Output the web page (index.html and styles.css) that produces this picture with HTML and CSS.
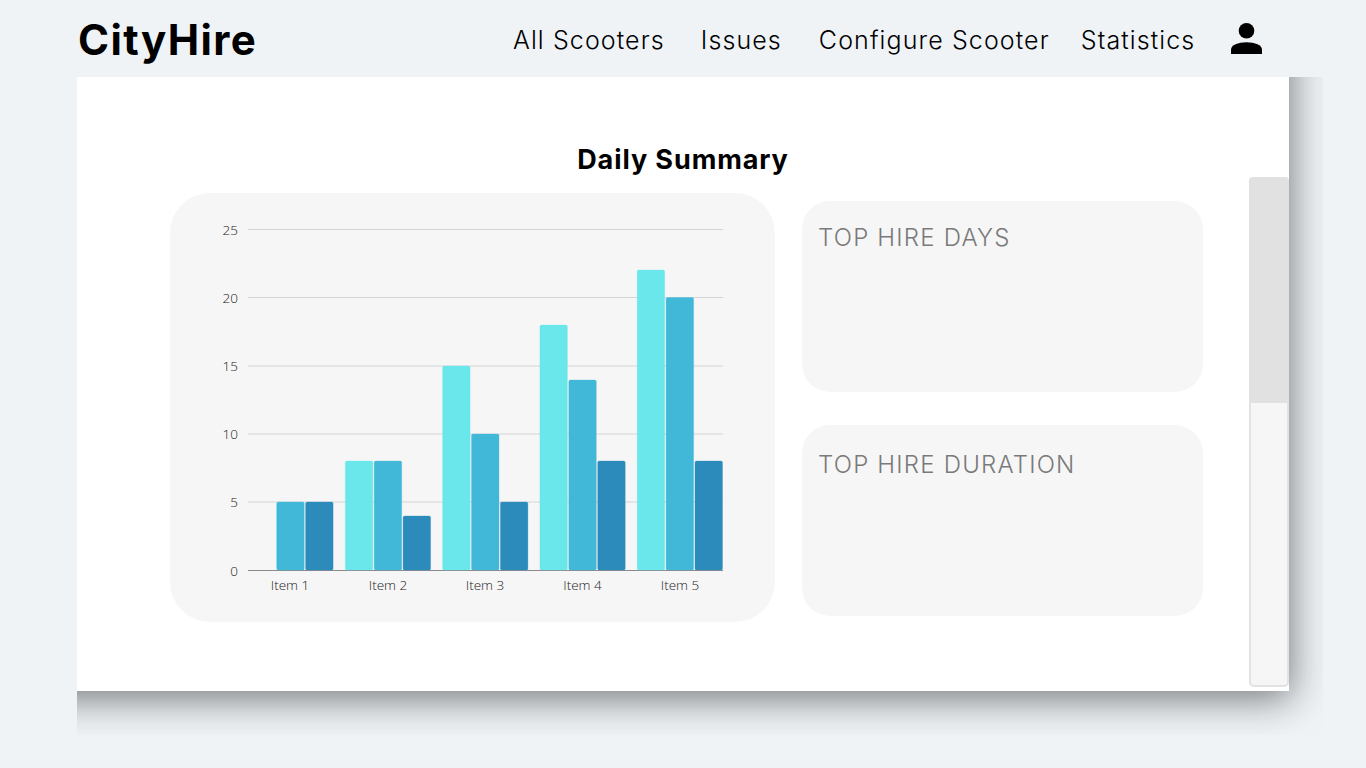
FILE: index.html
```html
<!DOCTYPE html>
<html>
<head>
    <title>CityHire - Daily Summary</title>
    <link rel="stylesheet" href="styles.css">
</head>
<body>

<header class="top-bar">
    <div class="logo">CityHire</div>
    <nav class="nav-links">
        <a class="nav-scooters">All Scooters</a>
        <a class="nav-issues">Issues</a>
        <a class="nav-configure">Configure Scooter</a>
        <a class="nav-statistics">Statistics</a>
    </nav>
    <svg class="user-icon" viewBox="0 0 32 32" width="32" height="32">
        <circle cx="15.5" cy="7.8" r="7.8"/>
        <path d="M0 31v-4.5c0-4.2 7-7.2 15.5-7.2s15.500 3 15.500 7.200v4.500z"/>
    </svg>
</header>

<main class="panel">
    <h1 class="page-title">Daily Summary</h1>

    <div class="summary-row">
        <section class="chart-card">
            <svg class="bar-chart" viewBox="0 0 605 429" width="605" height="429">
                <g class="grid">
                    <line x1="78" x2="553" y1="36.500" y2="36.500"/>
                    <line x1="78" x2="553" y1="104.500" y2="104.500"/>
                    <line x1="78" x2="553" y1="173" y2="173"/>
                    <line x1="78" x2="553" y1="241" y2="241"/>
                    <line x1="78" x2="553" y1="309" y2="309"/>
                    <line class="axis" x1="78" x2="553" y1="377.500" y2="377.500"/>
                </g>
                <g class="y-labels">
                    <text x="68" y="41.500">25</text>
                    <text x="68" y="109.500">20</text>
                    <text x="68" y="177.500">15</text>
                    <text x="68" y="245.500">10</text>
                    <text x="68" y="314">5</text>
                    <text x="68" y="382.500">0</text>
                </g>
                <g class="bars">
                    <rect class="bar-b" x="106.700" y="309" width="27.500" height="68" rx="1.500"/>
                    <rect class="bar-c" x="135.600" y="309" width="27.500" height="68" rx="1.500"/>

                    <rect class="bar-a" x="175.300" y="268" width="27.500" height="109" rx="1.500"/>
                    <rect class="bar-b" x="204.200" y="268" width="27.500" height="109" rx="1.500"/>
                    <rect class="bar-c" x="233.100" y="323" width="27.500" height="54" rx="1.500"/>

                    <rect class="bar-a" x="272.600" y="173" width="27.500" height="204" rx="1.500"/>
                    <rect class="bar-b" x="301.500" y="241" width="27.500" height="136" rx="1.500"/>
                    <rect class="bar-c" x="330.400" y="309" width="27.500" height="68" rx="1.500"/>

                    <rect class="bar-a" x="369.900" y="132" width="27.500" height="245" rx="1.500"/>
                    <rect class="bar-b" x="398.800" y="187" width="27.500" height="190" rx="1.500"/>
                    <rect class="bar-c" x="427.700" y="268" width="27.500" height="109" rx="1.500"/>

                    <rect class="bar-a" x="467.200" y="77" width="27.500" height="300" rx="1.500"/>
                    <rect class="bar-b" x="496.100" y="104.500" width="27.500" height="272.500" rx="1.500"/>
                    <rect class="bar-c" x="525" y="268" width="27.500" height="109" rx="1.500"/>
                </g>
                <g class="x-labels">
                    <text x="120" y="397">Item 1</text>
                    <text x="218" y="397">Item 2</text>
                    <text x="315" y="397">Item 3</text>
                    <text x="412.500" y="397">Item 4</text>
                    <text x="510" y="397">Item 5</text>
                </g>
            </svg>
        </section>

        <div class="side-cards">
            <section class="info-card">TOP HIRE DAYS</section>
            <section class="info-card info-card-low">TOP HIRE DURATION</section>
        </div>
    </div>

    <div class="scroll-track">
        <div class="scroll-thumb"></div>
    </div>
</main>

</body>
</html>
```

FILE: styles.css
```css
body {
    margin: 0; background-color: #EFF3F6; color: #000; font-family: 'Inter', sans-serif; height: 768px; overflow: hidden;
}

.top-bar {
    display: flex; align-items: center; height: 77px; padding-left: 78px;
}

.logo {
    width: 435px; font-size: 42px; font-weight: 700; letter-spacing: 1.4px; margin-top: 2px;
}

.nav-links {
    display: flex; font-size: 25px; font-weight: 300; letter-spacing: 1.1px; margin-top: 3px;
}

.nav-issues { margin-left: 36px; }
.nav-configure { margin-left: 37px; }
.nav-statistics { margin-left: 31px; }

.user-icon {
    margin-left: 36px;
}

.panel {
    position: relative; box-sizing: border-box; width: 1212px; height: 614px; margin-left: 77px; padding: 68px 86px 0 93px; background-color: #fff;
    clip-path: inset(0 -34px -44px 0);
}

/* shadow box runs past the top and left so it stays full strength at the clipped edges */
.panel::before {
    content: ""; position: absolute; top: -100px; left: -100px; right: 0; bottom: 0; z-index: -1;
    box-shadow: 0 6px 36px 2px rgba(20, 22, 25, 0.55);
}

.page-title {
    margin: 0 -86px 18px -93px; font-size: 27px; line-height: 30px; font-weight: 700; letter-spacing: 0.9px; text-align: center;
}

.summary-row {
    display: flex; gap: 27px;
}

.chart-card {
    width: 605px; height: 429px; background-color: #F6F6F6; border-radius: 40px;
}

.bar-chart { display: block; }

.grid line { stroke: #D4D4D4; stroke-width: 1; }
.grid .axis { stroke: #8A8A8A; }

.y-labels text { font-family: 'Open Sans', sans-serif; font-weight: 300; font-size: 13.5px; fill: #222; text-anchor: end; }
.x-labels text { font-family: 'Open Sans', sans-serif; font-weight: 300; font-size: 13.5px; fill: #222; text-anchor: middle; }

.bars rect { stroke-width: 1; stroke-opacity: 0.3; }
.bar-a { fill: #6AE7EB; stroke: #6AE7EB; }
.bar-b { fill: #41B8D8; stroke: #41B8D8; }
.bar-c { fill: #2C8BBB; stroke: #2C8BBB; }

.side-cards {
    display: flex; flex-direction: column; gap: 33px; padding-top: 8px;
}

.info-card {
    box-sizing: border-box; width: 401px; height: 191px; padding: 22px 16px; background-color: #F6F6F6; border-radius: 28px; color: #7A7A7A; font-size: 24px; line-height: 29px; font-weight: 300; letter-spacing: 1.2px;
}

.info-card-low { padding-top: 25px; }

.scroll-track {
    position: absolute; right: 0; top: 100px; box-sizing: border-box; width: 40px; height: 510px; background-color: #F6F6F6; border: 2px solid #E2E2E2; border-radius: 5px;
}

.scroll-thumb {
    height: 226px; margin: -2px -2px 0; background-color: #E1E1E1; border-radius: 4px 4px 0 0;
}
```
